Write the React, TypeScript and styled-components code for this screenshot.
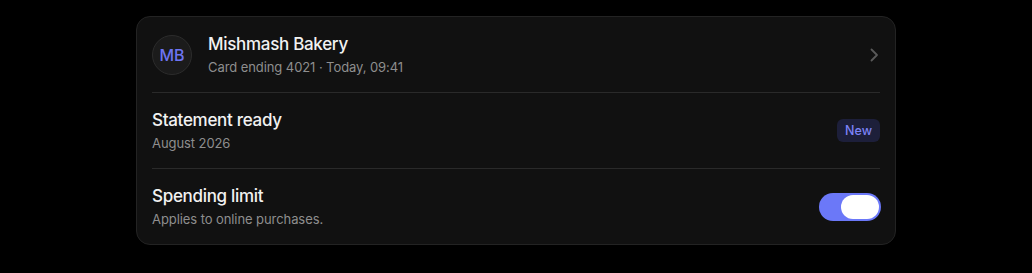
import React, { useState } from "react";
import styled, { createGlobalStyle } from "styled-components";

const Global = createGlobalStyle`
  html, body { margin: 0; padding: 0; background: #000; }
  body { font-family: Inter, "Noto Sans", sans-serif; -webkit-font-smoothing: antialiased; }
`;

const Page = styled.div`
  width: 1032px;
  height: 273px;
  display: flex;
  justify-content: center;
  padding-top: 16px;
  box-sizing: border-box;
`;

const Card = styled.div`
  width: 760px;
  height: 229px;
  box-sizing: border-box;
  background: #111111;
  border: 1px solid #232323;
  border-radius: 14px;
  padding: 0 15px;
  display: flex;
  flex-direction: column;
`;

const Row = styled.div<{ $last?: boolean }>`
  height: 76px;
  display: flex;
  align-items: center;
  gap: 16px;
  border-bottom: ${(p) => (p.$last ? "none" : "1px solid #2a2a2a")};
  box-sizing: border-box;
  flex: 0 0 auto;
`;

const Avatar = styled.div`
  width: 40px;
  height: 40px;
  border-radius: 50%;
  background: #1b1b1b;
  border: 1px solid #2c2c2c;
  box-sizing: border-box;
  display: flex;
  align-items: center;
  justify-content: center;
  color: #6d74f2;
  font-size: 16px;
  font-weight: 500;
  flex: 0 0 auto;
`;

const Texts = styled.div`
  flex: 1;
  display: flex;
  flex-direction: column;
  gap: 3px;
`;

const Title = styled.div`
  color: #f2f2f2;
  font-size: 17px;
  font-weight: 450;
  line-height: 21px;
  letter-spacing: -0.3px;
`;

const Sub = styled.div`
  color: #8e8e8e;
  font-size: 13px;
  line-height: 18px;
  letter-spacing: -0.08px;
`;

const Badge = styled.div`
  background: #1d1f3a;
  color: #7c83f7;
  font-size: 12.5px;
  font-weight: 500;
  border-radius: 6px;
  padding: 0 8px;
  height: 23px;
  display: flex;
  align-items: center;
`;

const Chevron = styled.svg`
  width: 14px;
  height: 14px;
  margin-right: -1px;
`;

const Toggle = styled.button<{ $on: boolean }>`
  width: 62px;
  height: 28px;
  border-radius: 14px;
  border: none;
  padding: 2px;
  margin-right: -1px;
  box-sizing: border-box;
  background: ${(p) => (p.$on ? "#6b78f8" : "#3a3a3a")};
  display: flex;
  justify-content: ${(p) => (p.$on ? "flex-end" : "flex-start")};
  cursor: pointer;
`;

const Thumb = styled.span`
  width: 38px;
  height: 24px;
  border-radius: 12px;
  background: #ffffff;
`;

export default function App() {
  const [on, setOn] = useState(true);
  return (
    <>
      <Global />
      <Page>
        <Card>
          <Row>
            <Avatar>MB</Avatar>
            <Texts>
              <Title>Mishmash Bakery</Title>
              <Sub>Card ending 4021 · Today, 09:41</Sub>
            </Texts>
            <Chevron viewBox="0 0 14 14" fill="none">
              <path d="M4.5 1.5 L10 7 L4.5 12.5" stroke="#5a5a5a" strokeWidth="1.8" strokeLinecap="round" strokeLinejoin="round" />
            </Chevron>
          </Row>
          <Row>
            <Texts>
              <Title>Statement ready</Title>
              <Sub>August 2026</Sub>
            </Texts>
            <Badge>New</Badge>
          </Row>
          <Row $last>
            <Texts>
              <Title>Spending limit</Title>
              <Sub>Applies to online purchases.</Sub>
            </Texts>
            <Toggle $on={on} onClick={() => setOn(!on)} aria-label="Spending limit">
              <Thumb />
            </Toggle>
          </Row>
        </Card>
      </Page>
    </>
  );
}
